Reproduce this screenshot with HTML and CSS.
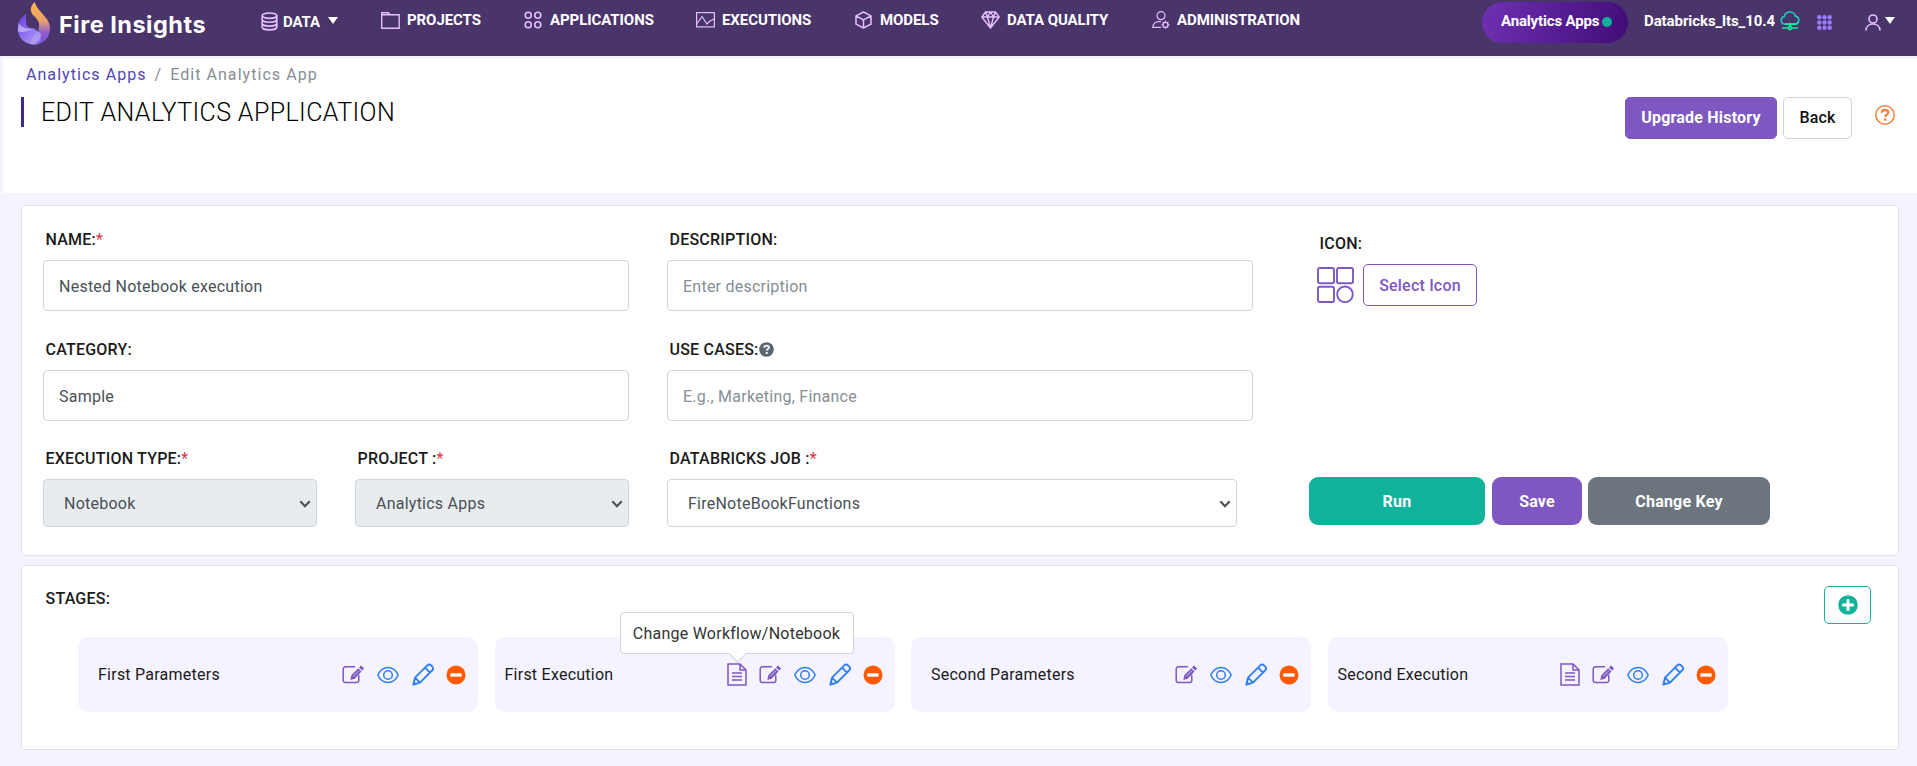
FILE: index.html
```
<!DOCTYPE html>
<html lang="en">
<head>
<meta charset="utf-8">
<title>Fire Insights - Edit Analytics App</title>
<link rel="stylesheet" href="styles.css">
</head>
<body>
<svg class="defs" width="0" height="0" aria-hidden="true">
  <symbol id="i-doc" viewBox="0 0 20 23"><path d="M1 1h12l6 6v15H1zM13 1v6h6M5 10h10M5 13.500h10M5 17h10" fill="none" stroke="#7e57c2" stroke-width="1.500"/></symbol>
  <symbol id="i-edit" viewBox="0 0 22 19"><path d="M12.500 1.800H3.500A2.300 2.300 0 0 0 1.200 4.100v11.100a2.300 2.300 0 0 0 2.300 2.300h11a2.300 2.300 0 0 0 2.300-2.300V10.500" fill="none" stroke="#7e57c2" stroke-width="1.500" stroke-linecap="round"/><path d="M8.300 15l1-4.700L16.300 3.200l3.200 3.200L12.700 13.700zM17.100 2.400l1.300-1.300a.9.900 0 0 1 1.200 0l1.900 1.900a.9.900 0 0 1 0 1.200l-1.200 1.300z" fill="#7e57c2"/><path d="M11.300 11.300l5.700-5.700" stroke="#f5f3ff" stroke-width=".7"/></symbol>
  <symbol id="i-eye" viewBox="0 0 22 18"><path d="M.8 9C3 4.200 6.600 1.500 11 1.500S19 4.200 21.200 9C19 13.800 15.400 16.500 11 16.500S3 13.800.8 9z" fill="none" stroke="#2f80ed" stroke-width="1.500"/><circle cx="11" cy="9" r="4.300" fill="none" stroke="#2f80ed" stroke-width="1.500"/></symbol>
  <symbol id="i-pencil" viewBox="0 0 22 23"><path d="M1.300 21.700l1.700-7L15.300 2.300a2.600 2.600 0 0 1 3.700 0l1.300 1.300a2.600 2.600 0 0 1 0 3.700L8 19.700zM3 14.700l5 5M13 4.700l5 5" fill="none" stroke="#2f80ed" stroke-width="1.900" stroke-linejoin="round"/><path d="M1 22.200l1-4 3 3z" fill="#2f80ed"/></symbol>
  <symbol id="i-minus" viewBox="0 0 20 20"><circle cx="10" cy="10" r="9.500" fill="#ff5a00"/><rect x="4.300" y="8.300" width="11.400" height="3.400" rx=".6" fill="#f5f3ff"/></symbol>
  <symbol id="i-chev" viewBox="0 0 12 8"><path d="M1.300 1.300L6 6.300l4.700-5" fill="none" stroke="currentColor" stroke-width="2"/></symbol>
</svg>

<header class="topbar">
  <div class="brand">
    <svg width="34" height="43" viewBox="0 0 34 43">
      <defs>
        <linearGradient id="flame" x1="0" y1="0" x2="0" y2="1"><stop offset="0" stop-color="#ffb648"/><stop offset=".45" stop-color="#e8a06e"/><stop offset=".72" stop-color="#8d5ccf"/><stop offset="1" stop-color="#7a4fe0"/></linearGradient>
        <linearGradient id="swirl" x1="0" y1="0" x2="1" y2="1"><stop offset="0" stop-color="#6a3be0"/><stop offset=".5" stop-color="#9277ee"/><stop offset="1" stop-color="#b9a8f6"/></linearGradient>
      </defs>
      <path d="M9 12C4 15 .8 20 .8 27 .8 36 8 42.500 17 42.500c6 0 10-3 12-7l-12-9c-5 0-8-2-8-5.500z" fill="url(#swirl)"/>
      <path d="M1.500 21c3 4.500 8 7 15.500 5.500-6 3-12 4-16 3z" fill="#cfc4fa" opacity=".7"/>
      <path d="M17.500 0c2 5.500 5 8.500 9 13 4 4.500 6.500 8 6.500 14 0 8.500-7 15.500-16 15.500 7-5 8-10.500 4.500-16C24 21 20 17 16 13c-3.500-4-2.500-9 1.500-13z" fill="url(#flame)"/>
      <path d="M22 27c-1.500 5-8 7-9.500 14.500 2 1 5 1.200 7.500.8 5.500-4 5.500-9.500 2-15.300z" fill="#b7a3f5" opacity=".45"/>
    </svg>
    <span class="brand-name">Fire Insights</span>
  </div>
  <nav class="menu">
    <a class="item data"><svg width="17" height="19" viewBox="0 0 17 19" fill="none" stroke="#e6bfff" stroke-width="1.600"><ellipse cx="8.500" cy="3.700" rx="7.300" ry="2.700"/><path d="M1.200 3.700v11.500c0 1.500 3.200 2.700 7.300 2.700s7.300-1.200 7.300-2.700V3.700M1.200 7.500c0 1.500 3.200 2.700 7.300 2.700s7.300-1.200 7.300-2.700M1.200 11.400c0 1.500 3.200 2.700 7.300 2.700s7.300-1.200 7.300-2.700"/></svg><span>DATA</span><i class="caret"></i></a>
    <a class="item projects"><svg width="19" height="17" viewBox="0 0 19 17"><path d="M.7 16.200V.8h6.600l1.700 2h9.200v13.400zM.7 2.800h8" fill="none" stroke="#e6bfff" stroke-width="1.400"/></svg><span>PROJECTS</span></a>
    <a class="item applications"><svg width="18" height="18" viewBox="0 0 18 18" fill="none" stroke="#e6bfff" stroke-width="1.600"><circle cx="4.200" cy="4.200" r="3"/><circle cx="13.800" cy="4.200" r="3"/><circle cx="4.200" cy="13.800" r="3"/><circle cx="13.800" cy="13.800" r="3"/></svg><span>APPLICATIONS</span></a>
    <a class="item executions"><svg width="19" height="16" viewBox="0 0 19 16" fill="none" stroke="#e6bfff" stroke-width="1.200"><rect x=".6" y=".6" width="17.800" height="14.300"/><path d="M1 11.500l5-7 5 7.500 3-3 4 -2"/></svg><span>EXECUTIONS</span></a>
    <a class="item models"><svg width="17" height="18" viewBox="0 0 17 18" fill="none" stroke="#e6bfff" stroke-width="1.500" stroke-linejoin="round"><path d="M8.500 1l7.500 3.800v8.400L8.500 17 1 13.200V4.800zM1 4.800l7.500 4 7.500-4M8.500 8.800V17"/></svg><span>MODELS</span></a>
    <a class="item quality"><svg width="19" height="18" viewBox="0 0 19 18" fill="none" stroke="#e6bfff" stroke-width="1.400" stroke-linejoin="round"><path d="M4.500 1h10l3.700 5-8.700 11L.8 6zM.8 6h17.400M4.500 1l2 5 3 11 3-11 2-5M6.500 6l3-5 3 5"/></svg><span>DATA QUALITY</span></a>
    <a class="item admin"><svg width="18" height="18" viewBox="0 0 18 18" fill="none" stroke="#e6bfff" stroke-width="1.200"><circle cx="9" cy="4.700" r="4"/><path d="M9 16.400H.8c0-3.700 2.600-5.800 6.200-5.800h2"/><circle cx="13.500" cy="13.800" r="2.500"/><path d="M13.500 9.800v1.500M13.500 16.300v1.500M9.500 13.800H11M16 13.800h1.500M10.700 11l1 1M15.300 15.600l1 1M10.700 16.600l1-1M15.300 12l1-1"/></svg><span>ADMINISTRATION</span></a>
  </nav>
  <div class="tools">
    <span class="pill">Analytics Apps<i class="dot"></i></span>
    <span class="cluster">Databricks_lts_10.4</span>
    <svg class="cloud" width="20" height="20" viewBox="0 0 20 20" fill="none" stroke-width="1.700"><path d="M5 13.200a4 4 0 0 1-.6-7.900 5.700 5.700 0 0 1 11-.2 4.100 4.100 0 0 1-.4 8.100z" stroke="#22c7c0"/><path d="M5 13.200h10a4 4 0 0 0 3.500-2M10 13.200V16M2 17h6M12 17h6" stroke="#0df09a"/><circle cx="10" cy="17" r="1.600" stroke="#0df09a"/></svg>
    <svg class="apps" width="15" height="15" viewBox="0 0 15 15" fill="#9b7bff"><circle cx="2.300" cy="2.300" r="2.200"/><circle cx="7.500" cy="2.300" r="2.200"/><circle cx="12.700" cy="2.300" r="2.200"/><circle cx="2.300" cy="7.500" r="2.200"/><circle cx="7.500" cy="7.500" r="2.200"/><circle cx="12.700" cy="7.500" r="2.200"/><circle cx="2.300" cy="12.700" r="2.200"/><circle cx="7.500" cy="12.700" r="2.200"/><circle cx="12.700" cy="12.700" r="2.200"/></svg>
    <svg class="user" width="16" height="17" viewBox="0 0 16 17" fill="none" stroke="#e6bfff" stroke-width="1.600"><circle cx="8" cy="5" r="4"/><path d="M1 16.500c0-4 3-6.500 7-6.500s7 2.500 7 6.500"/></svg>
    <i class="caret"></i>
  </div>
</header>

<section class="page-head">
  <div class="head-left">
    <div class="crumbs"><a>Analytics Apps</a><i>/</i><span>Edit Analytics App</span></div>
    <h1>EDIT ANALYTICS APPLICATION</h1>
  </div>
  <div class="head-right">
    <button class="btn solid">Upgrade History</button>
    <button class="btn plain">Back</button>
    <svg class="help" width="20" height="20" viewBox="0 0 20 20" fill="none" stroke="#f5803e"><circle cx="10" cy="10" r="9.200" stroke-width="1.500"/><path d="M6.800 7.800c0-1.800 1.400-2.800 3.200-2.800s3.200 1 3.200 2.600c0 2-3 2.100-3 4.300" stroke-width="2.300"/><path d="M10.200 13.400v2.300" stroke-width="2.500"/></svg>
  </div>
</section>

<main>
  <section class="card form">
    <div class="field name"><label>NAME:<b>*</b></label><div class="input">Nested Notebook execution</div></div>
    <div class="field desc"><label>DESCRIPTION:</label><div class="input ph">Enter description</div></div>
    <div class="field icon"><label>ICON:</label>
      <div class="icon-row"><svg width="37" height="36" viewBox="0 0 37 36" fill="none" stroke="#7e57c2" stroke-width="1.900"><rect x="1" y="1" width="16" height="15.300" rx="1.800"/><rect x="20" y="1" width="16" height="15.300" rx="1.800"/><rect x="1" y="19.700" width="16" height="15.300" rx="1.800"/><circle cx="28" cy="27.300" r="7.800"/></svg><button class="btn outline">Select Icon</button></div>
    </div>
    <div class="field cat"><label>CATEGORY:</label><div class="input">Sample</div></div>
    <div class="field cases"><label>USE CASES:<svg width="15" height="15" viewBox="0 0 15 15"><circle cx="7.500" cy="7.500" r="7.300" fill="#5a6570"/><path d="M5.200 5.800c0-1.500 1-2.200 2.300-2.200 1.400 0 2.400.7 2.400 1.900 0 1.500-2.200 1.600-2.200 3.200M7.700 10v1.900" fill="none" stroke="#fff" stroke-width="1.800"/></svg></label><div class="input ph">E.g., Marketing, Finance</div></div>
    <div class="field type"><label>EXECUTION TYPE:<b>*</b></label><div class="select off"><span>Notebook</span><svg width="12" height="8"><use href="#i-chev"/></svg></div></div>
    <div class="field proj"><label>PROJECT :<b>*</b></label><div class="select off"><span>Analytics Apps</span><svg width="12" height="8"><use href="#i-chev"/></svg></div></div>
    <div class="field job"><label>DATABRICKS JOB :<b>*</b></label><div class="select"><span>FireNoteBookFunctions</span><svg width="12" height="8"><use href="#i-chev"/></svg></div></div>
    <div class="actions"><button class="act run">Run</button><button class="act save">Save</button><button class="act key">Change Key</button></div>
  </section>

  <section class="card stages">
    <div class="stages-head"><label>STAGES:</label>
      <button class="add"><svg width="20" height="20" viewBox="0 0 20 20"><circle cx="10" cy="10" r="9.800" fill="#10b29b"/><path d="M10 4.200v11.600M4.200 10h11.600" stroke="#fff" stroke-width="3"/></svg></button></div>
    <div class="stage-list">
      <div class="stage wide"><span>First Parameters</span><div class="ops"><svg class="e"><use href="#i-edit"/></svg><svg class="v"><use href="#i-eye"/></svg><svg class="p"><use href="#i-pencil"/></svg><svg class="m"><use href="#i-minus"/></svg></div></div>
      <div class="stage"><span>First Execution</span><div class="ops"><div class="tip-host"><svg class="d"><use href="#i-doc"/></svg><div class="tip">Change Workflow/Notebook</div></div><svg class="e"><use href="#i-edit"/></svg><svg class="v"><use href="#i-eye"/></svg><svg class="p"><use href="#i-pencil"/></svg><svg class="m"><use href="#i-minus"/></svg></div></div>
      <div class="stage wide"><span>Second Parameters</span><div class="ops"><svg class="e"><use href="#i-edit"/></svg><svg class="v"><use href="#i-eye"/></svg><svg class="p"><use href="#i-pencil"/></svg><svg class="m"><use href="#i-minus"/></svg></div></div>
      <div class="stage"><span>Second Execution</span><div class="ops"><svg class="d"><use href="#i-doc"/></svg><svg class="e"><use href="#i-edit"/></svg><svg class="v"><use href="#i-eye"/></svg><svg class="p"><use href="#i-pencil"/></svg><svg class="m"><use href="#i-minus"/></svg></div></div>
    </div>
  </section>
</main>
</body>
</html>
```
FILE: styles.css
```
* { box-sizing: border-box; }
body { margin: 0; height: 766px; overflow: hidden; background: #f5f3ff; color: #212529; font: 16px/24px Roboto, sans-serif; }
svg { display: block; flex: none; }
.defs { position: absolute; }
button { font: inherit; padding: 0; cursor: pointer; }

.topbar { display: flex; height: 56px; background: #4a356b; color: #fff; font-weight: 700; font-size: 15px; letter-spacing: -.08px; }
.brand { display: flex; width: 261px; padding: 2px 0 0 17px; gap: 8px; }
.brand-name { font: 700 23.500px/45px Inter, sans-serif; letter-spacing: .5px; white-space: nowrap; }
.menu { display: flex; width: 1221px; }
.item { display: flex; height: 40px; align-items: center; white-space: nowrap; }
.item.data { width: 120px; height: 43px; gap: 5px; }
.item.projects { width: 143px; gap: 7px; }
.item.applications { width: 172px; gap: 8px; }
.item.executions { width: 159px; gap: 7px; }
.item.models { width: 126px; gap: 8px; }
.item.quality { width: 171px; gap: 7px; }
.item.admin { gap: 7px; }
.caret { width: 0; height: 0; border: 5px solid transparent; border-top: 7px solid #fff; border-bottom: 0; }
.data .caret { margin: -3px 0 0 3px; }
.tools { display: flex; height: 41px; margin-top: 2px; align-items: center; white-space: nowrap; font-weight: 700; letter-spacing: -.08px; }
.pill { display: flex; align-items: center; width: 146px; height: 41px; padding: 0 0 3px 19px; gap: 3px; border-radius: 21px; background: linear-gradient(100deg, #6f30b1, #410d78); letter-spacing: -.16px; }
.dot { width: 10px; height: 10px; margin-top: 2px; border-radius: 50%; background: #10b29b; }
.cluster { width: 136px; margin: -3px 0 0 16px; }
.cloud { margin-top: -3px; }
.apps { margin-left: 17px; }
.user { margin: 0 4px 0 33px; }
.tools .caret { margin-top: -5px; }

.page-head { display: flex; justify-content: space-between; height: 134px; margin: 3px 0 0 3px; background: #fff; }
.head-left { padding: 4px 0 0 18px; }
.crumbs { display: flex; padding-left: 5px; gap: 8px; letter-spacing: 1.050px; color: #868e96; }
.crumbs a { color: #5145b5; }
.crumbs i { font-style: normal; }
h1 { height: 30px; margin: 10px 0 0; padding-left: 17px; border-left: 3px solid #3f2a8c; font-size: 25px; font-weight: 300; line-height: 32px; letter-spacing: .4px; color: #000; white-space: nowrap; }
.head-right { display: flex; align-items: flex-start; padding: 38px 22px 0 0; }
.btn { height: 42px; border: 1px solid; border-radius: 5px; font-size: 16px; font-weight: 500; letter-spacing: .2px; background: #fff; white-space: nowrap; }
.btn.solid { width: 152px; border-color: #7e57c2; background: #7e57c2; color: #fff; font-weight: 700; }
.btn.plain { width: 69px; margin-left: 6px; border-color: #ced4da; color: #111; }
.btn.outline { width: 114px; padding-top: 2px; border-color: #7e57c2; color: #7e57c2; }
.help { margin: 8px 0 0 23px; }

main { display: flex; flex-direction: column; gap: 9px; padding: 12px 18px 0 21px; }
.card { border: 1px solid #dee2e6; border-radius: 4px; background: #fff; }
.form { display: grid; height: 351px; padding: 21px 0 0 21px; grid-template: 110px 109px 1fr / 274px 38px 274px 38px 586px 50px 1fr; }
.field label, .stages label { display: flex; height: 24px; padding-left: 2.500px; color: #1a1a1a; font-weight: 500; letter-spacing: .22px; white-space: nowrap; }
.field label { padding-top: 1px; margin-bottom: 9px; }
.field label b { color: #dc3545; font-weight: 400; }
.field label svg { margin-top: 4px; }
.name, .cat { grid-column: 1 / 4; }
.desc, .cases { grid-column: 5; }
.icon { grid-column: 7; padding: 4px 0 0 14px; }
.icon-row { display: flex; gap: 9px; align-items: center; }
.field.cat, .field.type { grid-column-start: 1; }
.type { grid-row: 3; }
.proj { grid-column: 3; grid-row: 3; }
.job { grid-column: 5; grid-row: 3; }
.input { height: 51px; padding: 0 15px; border: 1px solid #ced4da; border-radius: 4px; line-height: 52px; letter-spacing: .24px; color: #495057; }
.input.ph { color: #868e96; }
.select { display: flex; height: 48px; padding: 1px 5px 0 20px; border: 1px solid #ced4da; border-radius: 4px; align-items: center; justify-content: space-between; letter-spacing: .24px; color: #495057; }
.select span { padding-top: 1px; }
.job .select { width: 570px; }
.select.off { background: #e9ecef; }
.actions { grid-column: 7; grid-row: 3; display: flex; padding: 31px 0 0 6px; }
.act { height: 48px; padding-top: 2px; border: 0; border-radius: 9px; color: #fff; font-weight: 700; letter-spacing: .2px; }
.run { width: 176px; background: #10b29b; }
.save { width: 90px; margin: 0 6px 0 7px; background: #7e57c2; }
.key { width: 182px; background: #6c757d; }

.stages { height: 185px; padding: 20px 27px 0 21px; }
.stages-head { display: flex; justify-content: space-between; height: 51px; }
.stages-head label { margin-top: 1px; }
.add { display: flex; width: 47px; height: 38px; align-items: center; justify-content: center; border: 1px solid #10b29b; border-radius: 5px; background: #fff; }
.stage-list { display: grid; grid-template-columns: repeat(4, 400px); gap: 16.500px; padding-left: 35px; }
.stage { display: flex; height: 75px; padding: 0 12px 0 10px; align-items: center; justify-content: space-between; border-radius: 10px; background: #f5f3ff; letter-spacing: .24px; color: #1a1a1a; }
.stage.wide { padding-left: 20px; }
.ops { display: flex; align-items: center; }
.d { width: 20px; height: 23px; margin-right: 12px; }
.e { width: 22px; height: 19px; margin-right: 13px; }
.v { width: 22px; height: 18px; margin-right: 13px; }
.p { width: 22px; height: 23px; margin-right: 12px; }
.m { width: 20px; height: 20px; }
.tip-host { position: relative; }
.tip { position: absolute; left: -107px; bottom: 32px; width: 234px; height: 42px; border: 1px solid #ced4da; border-radius: 4px; background: #fff; color: #333; line-height: 41px; text-align: center; white-space: nowrap; }
.tip::after { content: ""; position: absolute; left: 110px; bottom: -7px; width: 12px; height: 12px; border: solid #ced4da; border-width: 0 1px 1px 0; background: #fff; transform: rotate(45deg); }
```
